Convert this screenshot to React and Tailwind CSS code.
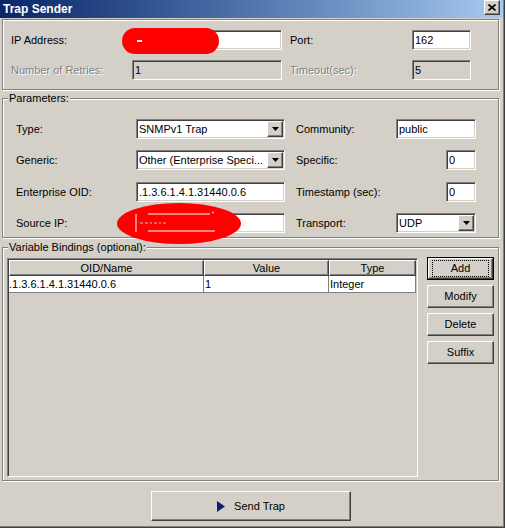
import React from "react";

const F = "font-['Liberation_Sans',Arial,sans-serif]";
const SUNKEN =
  "border border-t-[#808080] border-l-[#808080] border-b-white border-r-white shadow-[inset_1px_1px_0_#404040,inset_-1px_-1px_0_#d4d0c8]";
const RAISED =
  "border border-t-white border-l-white border-b-[#404040] border-r-[#404040] shadow-[inset_-1px_-1px_0_#808080]";
const ETCH =
  "border border-[#808080] shadow-[1px_1px_0_#ffffff,inset_1px_1px_0_#ffffff]";
const DIS = "text-[#808080] [text-shadow:1px_1px_0_#ffffff]";

function Input({ value, w, disabled }) {
  return (
    <div
      className={`${SUNKEN} ${w} h-[20px] ${
        disabled ? "bg-[#d4d0c8]" : "bg-white"
      } flex items-center pl-[2px] overflow-hidden whitespace-nowrap`}
    >
      {value}
    </div>
  );
}

function Select({ value, w }) {
  return (
    <div className={`${SUNKEN} ${w} h-[20px] bg-white flex items-center`}>
      <span className="flex-1 pl-[2px] whitespace-nowrap overflow-hidden">
        {value}
      </span>
      <span
        className={`${RAISED} bg-[#d4d0c8] w-[16px] h-[16px] mr-[1px] flex items-center justify-center shrink-0`}
      >
        <svg width="7" height="4" viewBox="0 0 7 4">
          <path d="M0 0h7L3.5 4z" fill="#000" />
        </svg>
      </span>
    </div>
  );
}

function Btn({ children, def }) {
  if (def) {
    return (
      <div className="w-[67px] h-[23px] border border-black">
        <div
          className={`${RAISED} h-full bg-[#d4d0c8] px-[3px] py-[1px] flex`}
        >
          <div className="flex-1 border border-dotted border-black flex items-center justify-center">
            {children}
          </div>
        </div>
      </div>
    );
  }
  return (
    <div
      className={`${RAISED} w-[67px] h-[23px] bg-[#d4d0c8] flex items-center justify-center`}
    >
      {children}
    </div>
  );
}

export default function App() {
  return (
    <div
      className={`${F} text-[11px] leading-[13px] text-black bg-white w-[506px] h-[531px] relative overflow-hidden`}
    >
      <div className="w-[505px] h-[528px] border-r border-b border-[#404040]">
        <div className="h-full border-r border-b border-[#808080] bg-[#d4d0c8] flex flex-col">
          {/* Title bar */}
          <div className="h-[18px] shrink-0 flex items-start justify-between bg-linear-to-r from-[#0a246a] to-[#a6caf0]">
            <span className="pl-[3px] h-[18px] flex items-center text-white font-bold text-[12px]">
              Trap Sender
            </span>
            <span
              className={`${RAISED} bg-[#d4d0c8] w-[16px] h-[15px] mr-[3px] flex items-center justify-center`}
            >
              <svg width="8" height="7" viewBox="0 0 8 7">
                <path
                  d="M0.5 0.5L7.5 6.5M7.5 0.5L0.5 6.5"
                  stroke="#000"
                  strokeWidth="1.6"
                />
              </svg>
            </span>
          </div>

          <div className="pt-[1px] pl-[2px] flex flex-col">
            {/* Top box */}
            <div
              className={`${ETCH} w-[497px] pt-[10px] pb-[9px] pl-[8px] flex flex-col gap-[10px]`}
            >
              <div className="flex items-center h-[20px]">
                <span className="w-[121px]">IP Address:</span>
                <Input w="w-[150px]" value="" />
                <span className="ml-[8px] w-[122px]">Port:</span>
                <Input w="w-[59px]" value="162" />
              </div>
              <div className="flex items-center h-[20px]">
                <span className={`w-[121px] ${DIS}`}>Number of Retries:</span>
                <Input w="w-[150px]" value="1" disabled />
                <span className={`ml-[8px] w-[122px] ${DIS}`}>
                  Timeout(sec):
                </span>
                <Input w="w-[59px]" value="5" disabled />
              </div>
            </div>

            {/* Parameters */}
            <fieldset className={`${ETCH} w-[497px] mt-[2px] min-w-0`}>
              <legend className="ml-[5px] px-[1px] leading-[13px] bg-[#d4d0c8]">
                Parameters:
              </legend>
              <div className="pt-[14px] pb-[4px] pl-[13px] flex flex-col">
                <div className="flex items-center h-[20px]">
                  <span className="w-[120px]">Type:</span>
                  <Select w="w-[149px]" value="SNMPv1 Trap" />
                  <span className="ml-[11px] w-[100px]">Community:</span>
                  <div className="w-[80px] flex justify-end">
                    <Input w="w-[80px]" value="public" />
                  </div>
                </div>
                <div className="flex items-center h-[20px] mt-[11px]">
                  <span className="w-[120px]">Generic:</span>
                  <Select w="w-[149px]" value="Other (Enterprise Speci..." />
                  <span className="ml-[11px] w-[100px]">Specific:</span>
                  <div className="w-[80px] flex justify-end">
                    <Input w="w-[30px]" value="0" />
                  </div>
                </div>
                <div className="flex items-center h-[20px] mt-[12px]">
                  <span className="w-[120px]">Enterprise OID:</span>
                  <Input w="w-[149px]" value=".1.3.6.1.4.1.31440.0.6" />
                  <span className="ml-[11px] w-[100px]">Timestamp (sec):</span>
                  <div className="w-[80px] flex justify-end">
                    <Input w="w-[30px]" value="0" />
                  </div>
                </div>
                <div className="flex items-center h-[20px] mt-[11px]">
                  <span className="w-[120px]">Source IP:</span>
                  <Input w="w-[149px]" value="" />
                  <span className="ml-[11px] w-[100px]">Transport:</span>
                  <div className="w-[80px] flex justify-end">
                    <Select w="w-[80px]" value="UDP" />
                  </div>
                </div>
              </div>
            </fieldset>

            {/* Variable Bindings */}
            <fieldset className={`${ETCH} w-[497px] mt-[3px] min-w-0`}>
              <legend className="ml-[5px] px-[1px] leading-[13px] bg-[#d4d0c8]">
                Variable Bindings (optional):
              </legend>
              <div className="flex pl-[4px] pt-[4px] pb-[3px]">
                <div
                  className={`${SUNKEN} bg-[#d4d0c8] w-[411px] h-[219px] p-[1px] flex flex-col`}
                >
                  <div className="flex h-[16px]">
                    <div
                      className={`${RAISED} bg-[#d4d0c8] w-[195px] flex items-center justify-center`}
                    >
                      OID/Name
                    </div>
                    <div
                      className={`${RAISED} bg-[#d4d0c8] w-[125px] flex items-center justify-center`}
                    >
                      Value
                    </div>
                    <div
                      className={`${RAISED} bg-[#d4d0c8] w-[87px] flex items-center justify-center`}
                    >
                      Type
                    </div>
                  </div>
                  <div className="flex h-[17px] bg-white">
                    <div className="w-[195px] border-r border-b border-[#808080] pl-[0px] flex items-center">
                      .1.3.6.1.4.1.31440.0.6
                    </div>
                    <div className="w-[125px] border-r border-b border-[#808080] pl-[1px] flex items-center">
                      1
                    </div>
                    <div className="w-[87px] border-r border-b border-[#808080] pl-[1px] flex items-center">
                      Integer
                    </div>
                  </div>
                </div>
                <div className="ml-[9px] -mt-[1px] flex flex-col gap-[5px]">
                  <Btn def>Add</Btn>
                  <Btn>Modify</Btn>
                  <Btn>Delete</Btn>
                  <Btn>Suffix</Btn>
                </div>
              </div>
            </fieldset>

            {/* Send Trap */}
            <div className="mt-[10px] ml-[149px]">
              <div
                className={`${RAISED} bg-[#d4d0c8] w-[200px] h-[30px] flex items-center justify-center gap-[9px]`}
              >
                <svg width="8" height="11" viewBox="0 0 8 11">
                  <path d="M0 0L8 5.5L0 11z" fill="#0a246a" />
                </svg>
                <span>Send Trap</span>
              </div>
            </div>
          </div>
        </div>
      </div>

      {/* Redaction marks */}
      <div className="absolute left-[122px] top-[28px] w-[97px] h-[26px] rounded-full bg-[#ff0000]" />
      <div className="absolute left-[137px] top-[40px] w-[5px] h-[2px] bg-white" />
      <svg
        className="absolute left-[116px] top-[202px]"
        width="126"
        height="43"
        viewBox="0 0 126 43"
      >
        <ellipse cx="63" cy="21.5" rx="62" ry="20.5" fill="#ff0000" />
        <path d="M32 12H94" stroke="#ffffff" strokeWidth="1" />
        <path d="M32 29H99" stroke="#ffffff" strokeWidth="1" />
        <path d="M20 12V30" stroke="#ffffff" strokeWidth="1" />
        <path
          d="M24 21h3M29 21h3M34 21h2M38 21h3M43 21h2M47 21h3"
          stroke="#c8c8c8"
          strokeWidth="1.2"
        />
        <path d="M96 10l2 1" stroke="#ffffff" strokeWidth="1" />
      </svg>
    </div>
  );
}
